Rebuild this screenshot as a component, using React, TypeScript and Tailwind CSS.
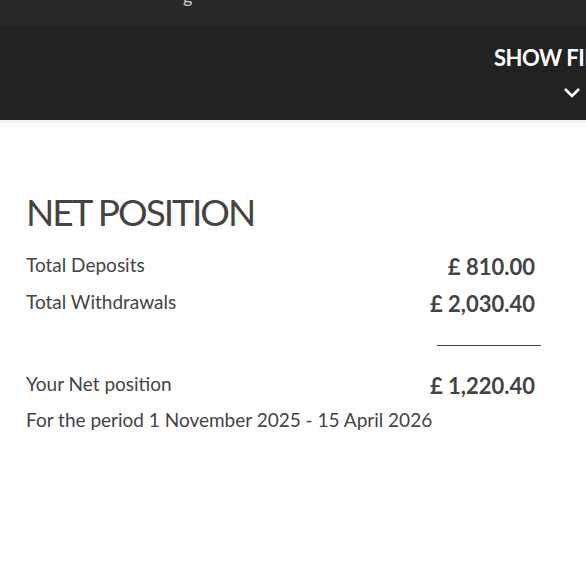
export default function App() {
  const font = { fontFamily: 'Lato, "Open Sans", sans-serif' }
  return (
    <div className="min-h-[566px] bg-white text-[#444]" style={font}>
      <div className="h-[25px] bg-[#282828] overflow-hidden relative">
        <span className="absolute left-[183px] top-[-17px] text-[18px] text-[#ccc]">g</span>
      </div>
      <div className="h-[95px] bg-[#222222] overflow-hidden">
        <div className="ml-[494px] w-[160px] pt-[16px] flex flex-col items-center">
          <span className="whitespace-nowrap text-[22px] font-bold text-white tracking-[-0.5px] self-start">
            SHOW FILTERS
          </span>
          <svg width="18" height="12" viewBox="0 0 18 12" className="mt-[13px] self-start ml-[69px]">
            <path d="M2 2l7 7 7-7" stroke="#fff" strokeWidth="2.6" fill="none" />
          </svg>
        </div>
      </div>
      <div className="h-[3px] bg-[#f2f2f2]" />

      <div className="pl-[26px] pt-[67px] w-[541px]">
        <h1 className="text-[37px] leading-[44px] font-normal text-[#444] tracking-[-2px]">NET POSITION</h1>

        <div className="mt-[12px] flex justify-between items-baseline text-[19px] leading-[36px]">
          <span>Total Deposits</span>
          <span className="relative top-[3px] font-bold text-[22px] pr-[6px]">£ 810.00</span>
        </div>
        <div className="flex justify-between items-baseline text-[19px] leading-[36px]">
          <span>Total Withdrawals</span>
          <span className="relative top-[3px] font-bold text-[22px] pr-[6px]">£ 2,030.40</span>
        </div>

        <div className="flex justify-end mt-[25px] mb-[19px]">
          <div className="w-[104px] h-px bg-[#444]" />
        </div>

        <div className="flex justify-between items-baseline text-[19px] leading-[36px]">
          <span>Your Net position</span>
          <span className="relative top-[3px] font-bold text-[22px] pr-[6px]">£ 1,220.40</span>
        </div>
        <div className="text-[19px] leading-[36px]">For the period 1 November 2025 - 15 April 2026</div>
      </div>
    </div>
  )
}
